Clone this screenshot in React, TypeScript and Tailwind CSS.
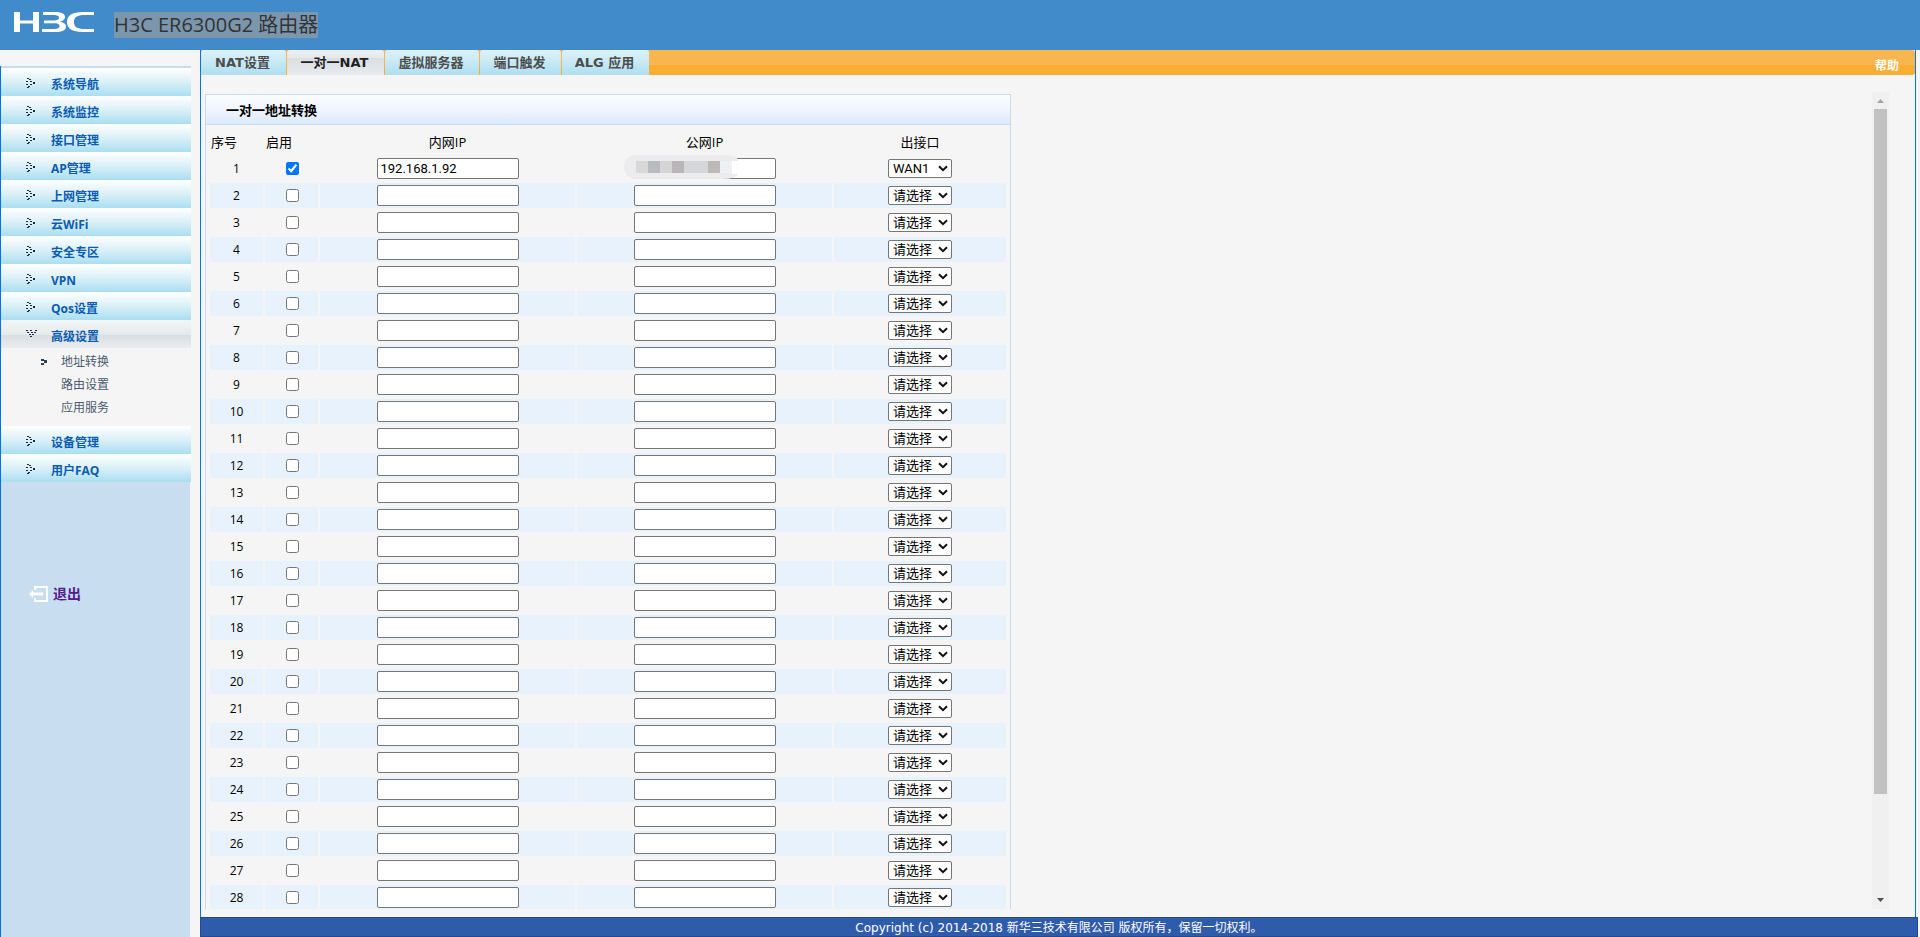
const groups = [
  { label: '系统导航' },
  { label: '系统监控' },
  { label: '接口管理' },
  { label: 'AP管理' },
  { label: '上网管理' },
  { label: '云WiFi' },
  { label: '安全专区' },
  { label: 'VPN' },
  { label: 'Qos设置' },
  { label: '高级设置', children: ['地址转换', '路由设置', '应用服务'] },
  { label: '设备管理' },
  { label: '用户FAQ' },
];

const tabs = [
  { label: 'NAT设置', width: 'w-[85px]' },
  { label: '一对一NAT', width: 'w-[97px]', active: true },
  { label: '虚拟服务器', width: 'w-[94px]' },
  { label: '端口触发', width: 'w-[81px]' },
  { label: 'ALG 应用', width: 'w-[87px]' },
];

const rows = Array.from({ length: 28 }, (_, i) => ({
  id: i + 1,
  enabled: i === 0,
  inner: i === 0 ? '192.168.1.92' : '',
  wan: i === 0 ? 'WAN1' : '',
}));

function Logo() {
  return (
    <svg viewBox="0 0 82 22" className="h-[22px] w-[82px]" fill="#fff" aria-label="H3C">
      <rect x="1" width="6" height="20" />
      <rect x="20" width="6" height="20" />
      <rect x="6" y="8.500" width="15" height="3" />
      <path d="M30 0H42C50 0 52 2.500 52 5C52 7.500 50 9 47 9.700C51 10.300 53 12 53 14.500C53 18.500 49 20 42 20H29V17H40C45 17 46.500 16 46.500 14C46.500 12 45 11.200 40 11.200H31V8.500H40C44.500 8.500 46 7.500 46 5.800C46 4 44.500 3 40 3H30Z" />
      <path d="M81 0H70C59 0 54 3.500 54 10S59 20 70 20H81V17H72C64 17 61 15 61 10S64 3 72 3H81Z" />
    </svg>
  );
}

function DotArrow({ open }: { open?: boolean }) {
  const dots = open
    ? [[0, 0], [4, 0], [9, 0], [1, 2], [5, 2], [8, 2], [3, 4], [6, 4], [4, 6]]
    : [[1, 0], [0, 3], [0, 6], [1, 9], [3, 1], [4, 3], [4, 6], [2, 8], [7, 4], [7, 5]];
  return (
    <svg viewBox="0 0 11 11" className="mt-[3px] h-[11px] w-[11px]" fill="#1c2a44" shapeRendering="crispEdges" aria-hidden="true">
      {dots.map(([x, y]) => (
        <rect key={`${x}-${y}`} x={x} y={y} width="2" height="1" />
      ))}
    </svg>
  );
}

function Sidebar() {
  return (
    <aside className="mt-4 flex w-[191px] flex-col border-l border-[#0073e6]">
      <div className="h-[2px] bg-[#c8ddf0]" />
      <nav>
        {groups.map(({ label, children }) => (
          <div key={label}>
            <a
              href="#"
              className={`flex h-7 items-center pl-[25px] font-bold text-[#0a5cb0] ${
                children
                  ? 'bg-[linear-gradient(#f3f5f6,#e6eaed_54%,#d9dee2_54%,#eaedef)]'
                  : 'bg-linear-to-b from-white via-[#daf0f8] to-[#a9def1]'
              }`}
            >
              <DotArrow open={!!children} />
              <span className="ml-[14px] pt-[5px]">{label}</span>
            </a>
            {children && (
              <ul className="pt-[2px] pb-[7px]">
                {children.map((child, i) => (
                  <li key={child} className="flex h-[23px] items-center pl-10 text-[#4a5b70]">
                    <svg viewBox="0 0 6 6" className="mr-[14px] h-[6px] w-[6px]" fill="#2f4055" aria-hidden="true">
                      {i === 0 && <path d="M0 0H3V1H6V4H3V6H0V4H3V2H0Z" />}
                    </svg>
                    <a href="#">{child}</a>
                  </li>
                ))}
              </ul>
            )}
          </div>
        ))}
      </nav>
      <div className="mr-px flex-1 bg-[#c8ddf0] pt-[101px] pl-7">
        <a href="#" className="flex items-center gap-1 text-[14px] font-bold text-[#551a8b]">
          <svg viewBox="0 0 20 16" className="h-4 w-5" fill="none" stroke="#fff" strokeWidth="2" aria-hidden="true">
            <path d="M6 4V1H18V15H6V12" />
            <path d="M3 8H14" strokeWidth="3" />
            <path d="M0 8L4 4V12Z" fill="#fff" stroke="none" />
          </svg>
          退出
        </a>
      </div>
    </aside>
  );
}

function TabBar() {
  return (
    <div className="flex h-[25px] rounded-r-[3px] bg-linear-to-b from-[#f9b650] from-60% to-[#f9ad33] to-60%">
      <nav className="flex gap-px font-['DejaVu_Sans','Noto_Sans_CJK_SC',sans-serif] text-[13px] font-bold text-[#4d4d4d]">
        {tabs.map(({ label, width, active }) => (
          <a
            key={label}
            href="#"
            className={`flex ${width} items-center justify-center rounded-t-[3px] pr-[2px] ${
              active
                ? 'bg-[linear-gradient(#eef0f1,#e6e9eb_30%,#d9dee1_30%,#e8ebed)] text-[#1f1f1f]'
                : 'bg-linear-to-b from-[#def2f9] to-[#aedff0]'
            }`}
          >
            {label}
          </a>
        ))}
      </nav>
      <a href="#" className="mt-[7px] mr-4 ml-auto text-[12px] font-bold text-white">
        帮助
      </a>
    </div>
  );
}

function Chevron() {
  return (
    <svg viewBox="0 0 10 7" className="pointer-events-none absolute top-[6px] right-1 h-[7px] w-[10px]" fill="none" stroke="#111" strokeWidth="2" aria-hidden="true">
      <path d="M1 1.200L5 5.200L9 1.200" />
    </svg>
  );
}

// masked public address
function Mosaic() {
  return (
    <svg viewBox="0 0 114 24" className="absolute -top-[3px] -left-[10px] h-6 w-[114px]" aria-hidden="true">
      <path d="M12 0H100Q114 0 114 6H108V19H114Q112 24 98 24H12A12 12 0 0 1 12 0Z" fill="#ececee" />
      <rect x="12" y="6" width="12" height="12" fill="#d8d8d8" />
      <rect x="24" y="6" width="12" height="12" fill="#b9bbc1" />
      <rect x="36" y="6" width="12" height="12" fill="#d5d5d6" />
      <rect x="48" y="6" width="12" height="12" fill="#b8b6b8" />
      <rect x="60" y="6" width="24" height="12" fill="#d5d6d9" />
      <rect x="84" y="6" width="12" height="12" fill="#bbbab7" />
      <rect x="96" y="6" width="12" height="12" fill="#eef0f4" />
    </svg>
  );
}

function NatTable() {
  return (
    <table className="w-full table-fixed border-separate border-spacing-[2px]">
      <colgroup>
        <col className="w-[53px]" />
        <col className="w-[53px]" />
        <col className="w-[255px]" />
        <col className="w-[255px]" />
        <col />
      </colgroup>
      <thead>
        <tr className="h-[25px] text-[13px]">
          <th className="p-0 pt-[2px] pl-px text-left font-normal">序号</th>
          <th className="p-0 pt-[2px] pl-px text-left font-normal">启用</th>
          <th className="p-0 pt-[2px] font-normal">内网IP</th>
          <th className="p-0 pt-[2px] font-normal">公网IP</th>
          <th className="p-0 pt-[2px] font-normal">出接口</th>
        </tr>
      </thead>
      <tbody>
        {rows.map(({ id, enabled, inner, wan }) => (
          <tr key={id} className="h-[25px] text-center even:bg-[#e8f2fd]">
            <td className="p-0">{id}</td>
            <td className="p-0 pl-[2px]">
              <input type="checkbox" aria-label={`启用 ${id}`} defaultChecked={enabled} className="mx-auto block h-[13px] w-[13px] accent-[#0075ff]" />
            </td>
            <td className="p-0">
              <input
                type="text"
                aria-label={`内网IP ${id}`}
                defaultValue={inner}
                className="mx-auto block h-[21px] w-[142px] rounded-[2px] border border-[#767676] bg-white px-[3px] font-[Roboto,sans-serif] text-[13px]"
              />
            </td>
            <td className="p-0">
              <div className="relative mx-auto h-[21px] w-[142px]">
                <input
                  type="text"
                  aria-label={`公网IP ${id}`}
                  className="block h-[21px] w-full rounded-[2px] border border-[#767676] bg-white px-[3px] font-[Roboto,sans-serif] text-[13px]"
                />
                {id === 1 && <Mosaic />}
              </div>
            </td>
            <td className="p-0">
              <div className="relative mx-auto h-[19px] w-16">
                <select
                  aria-label={`出接口 ${id}`}
                  defaultValue={wan}
                  className="block h-[19px] w-full appearance-none rounded-[2px] border border-[#767676] bg-white pl-1 font-[Roboto,'Noto_Sans_CJK_SC',sans-serif] text-[13px] leading-[17px]"
                >
                  <option value="">请选择</option>
                  <option value="WAN1">WAN1</option>
                </select>
                <Chevron />
              </div>
            </td>
          </tr>
        ))}
      </tbody>
    </table>
  );
}

function ScrollBar() {
  return (
    <div className="mr-[26px] ml-auto flex w-[17px] flex-col items-center bg-[#f0f0f0]">
      <svg viewBox="0 0 17 17" className="h-[17px] w-[17px] shrink-0" fill="#a3a3a3" aria-hidden="true">
        <path d="M5 11L8.500 7L12 11Z" />
      </svg>
      <div className="w-full flex-1 px-[2px]">
        <div className="h-7/8 bg-[#c1c1c1]" />
      </div>
      <svg viewBox="0 0 17 17" className="h-[17px] w-[17px] shrink-0" fill="#505050" aria-hidden="true">
        <path d="M5 6L8.500 10L12 6Z" />
      </svg>
    </div>
  );
}

export default function App() {
  return (
    <div className="flex h-screen flex-col overflow-hidden bg-[#f5f5f5] font-['Open_Sans','Noto_Sans_CJK_SC',sans-serif] text-[12px] text-black">
      <header className="flex h-[50px] shrink-0 items-start bg-[#418bca] pt-3 pl-[13px]">
        <Logo />
        <h1 className="ml-[19px] h-[26px] bg-[#7b97ae] text-[20px] leading-[26px] text-[#333]">H3C ER6300G2 路由器</h1>
      </header>
      <div className="flex min-h-0 flex-1">
        <Sidebar />
        <div className="ml-[9px] flex min-w-0 flex-1 flex-col">
          <main className="mr-1 flex min-h-0 flex-1 flex-col border-x border-[#0073e6]">
            <TabBar />
            <div className="mt-[17px] mb-2 flex min-h-0 flex-1 overflow-hidden pl-1">
              <section className="mt-[2px] w-[806px] shrink-0 self-start border border-[#c8dcf0]">
                <h2 className="flex h-[30px] items-center border-b border-[#c8dcf0] bg-linear-to-b from-[#fbfdff] via-[#f0f5ff] to-[#dce9fb] pt-[2px] pl-5 text-[13px] font-bold">
                  一对一地址转换
                </h2>
                <div className="px-[2px] pt-[2px]">
                  <NatTable />
                </div>
              </section>
              <ScrollBar />
            </div>
          </main>
          <footer className="mr-[2px] flex h-5 shrink-0 items-center justify-center border border-[#214a8f] bg-[#2f5bab] pt-[2px] font-['DejaVu_Sans','Noto_Sans_CJK_SC',sans-serif] text-[12px] text-white">
            Copyright (c) 2014-2018 新华三技术有限公司 版权所有，保留一切权利。
          </footer>
        </div>
      </div>
    </div>
  );
}
